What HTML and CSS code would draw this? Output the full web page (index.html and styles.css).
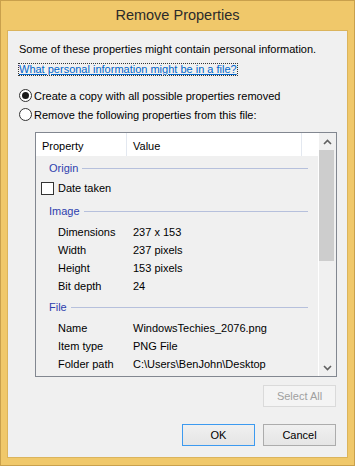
FILE: index.html
```html
<!DOCTYPE html>
<html lang="en">
<head>
  <meta charset="UTF-8">
  <meta name="viewport" content="width=device-width, initial-scale=1.0">
  <title>Remove Properties</title>
  <link rel="stylesheet" href="styles.css">
</head>
<body>

  <!-- Dialog window -->
  <div class="window">
    <div class="titlebar">Remove Properties</div>

    <div class="client">
      <p class="intro">Some of these properties might contain personal information.</p>
      <a class="help-link" href="#">What personal information might be in a file?</a>

      <div class="options">
        <label class="radio"><span class="dot checked"></span>Create a copy with all possible properties removed</label>
        <label class="radio"><span class="dot"></span>Remove the following properties from this file:</label>
      </div>

      <!-- Property list -->
      <div class="listbox">
        <div class="list">
          <div class="list-head">
            <div class="col-prop">Property</div>
            <div class="col-val">Value</div>
            <div class="col-rest"></div>
          </div>

          <div class="group first"><span>Origin</span></div>
          <div class="check-row"><span class="box"></span>Date taken</div>

          <div class="group"><span>Image</span></div>
          <div class="row"><span class="name">Dimensions</span><span>237 x 153</span></div>
          <div class="row"><span class="name">Width</span><span>237 pixels</span></div>
          <div class="row"><span class="name">Height</span><span>153 pixels</span></div>
          <div class="row"><span class="name">Bit depth</span><span>24</span></div>

          <div class="group"><span>File</span></div>
          <div class="row"><span class="name">Name</span><span>WindowsTechies_2076.png</span></div>
          <div class="row"><span class="name">Item type</span><span>PNG File</span></div>
          <div class="row"><span class="name">Folder path</span><span>C:\Users\BenJohn\Desktop</span></div>
        </div>

        <div class="scrollbar">
          <div class="arrow">
            <svg width="9" height="6" viewBox="0 0 9 6"><polyline points="1,5 4.5,1.5 8,5" fill="none" stroke="#606060" stroke-width="1.6"/></svg>
          </div>
          <div class="thumb"></div>
          <div class="track"></div>
          <div class="arrow">
            <svg width="9" height="6" viewBox="0 0 9 6"><polyline points="1,1 4.5,4.5 8,1" fill="none" stroke="#606060" stroke-width="1.6"/></svg>
          </div>
        </div>
      </div>

      <div class="select-row">
        <button class="btn" disabled>Select All</button>
      </div>

      <div class="footer">
        <button class="btn default">OK</button>
        <button class="btn">Cancel</button>
      </div>
    </div>
  </div>

</body>
</html>
```

FILE: styles.css
```css
* {
  box-sizing: border-box;
}

body {
  margin: 0;
  font-family: "Liberation Sans", Arial, sans-serif;
  font-size: 11px;
  color: #000;
}

/* Window frame */
.window {
  width: 355px;
  height: 466px;
  background-color: #f0c86a;
  border: 1px solid #c9a04c;
  display: flex;
  flex-direction: column;
}

.titlebar {
  height: 29px;
  line-height: 28px;
  text-align: center;
  font-size: 14.5px;
  color: #2b2b2b;
}

.client {
  margin: 0 6px;
  height: 428px;
  background-color: #f0f0f0;
  border: 1px solid #dbb45c;
  padding: 10px 10px 0 11px;
  display: flex;
  flex-direction: column;
}

.intro {
  margin: 0;
  line-height: 17px;
}

.help-link {
  align-self: flex-start;
  margin: 5px 0 0 -1px;
  line-height: 11px;
  border: 1px dotted #333;
  color: #0066cc;
  text-decoration: underline;
}

/* Radio options */
.options {
  margin-top: 10px;
  display: flex;
  flex-direction: column;
}

.radio {
  height: 19px;
  display: flex;
  align-items: center;
  gap: 2px;
}

.dot {
  width: 13px;
  height: 13px;
  border: 1px solid #333;
  border-radius: 50%;
  background-color: #fff;
  display: flex;
  align-items: center;
  justify-content: center;
}

.dot.checked::after {
  content: "";
  width: 7px;
  height: 7px;
  border-radius: 50%;
  background-color: #1a1a1a;
}

/* List box */
.listbox {
  margin: 8px 0 0 16px;
  width: 302px;
  height: 245px;
  border: 1px solid #828790;
  display: flex;
}

.list {
  flex: 1;
  display: flex;
  flex-direction: column;
}

.list-head {
  height: 23px;
  display: flex;
  background-color: #fff;
}

.list-head div {
  padding: 3px 0 0 6px;
  line-height: 20px;
}

.col-prop {
  width: 91px;
  border-right: 1px solid #e3e8f0;
}

.col-val {
  width: 175px;
  border-right: 1px solid #e3e8f0;
}

.col-rest {
  flex: 1;
}

.group {
  height: 22px;
  margin-top: 2px;
  padding: 2px 10px 0 13px;
  display: flex;
  align-items: center;
  gap: 4px;
  color: #2e3fae;
}

.group.first {
  margin-top: 0;
}

.group::after {
  content: "";
  flex: 1;
  height: 1px;
  background-color: #b6c0dc;
}

.check-row {
  height: 19px;
  padding: 1px 0 0 5px;
  display: flex;
  align-items: center;
  gap: 4px;
}

.box {
  width: 13px;
  height: 13px;
  border: 1px solid #333;
  background-color: #fff;
}

.row {
  height: 18px;
  padding: 4px 0 0 22px;
  display: flex;
  align-items: center;
}

.row .name {
  width: 75px;
}

/* Scroll bar */
.scrollbar {
  width: 18px;
  border-left: 1px solid #fff;
  display: flex;
  flex-direction: column;
}

.arrow {
  height: 17px;
  display: flex;
  align-items: center;
  justify-content: center;
}

.thumb {
  height: 111px;
  margin-right: 2px;
  background-color: #cdcdcd;
}

.track {
  flex: 1;
}

/* Buttons */
.select-row,
.footer {
  display: flex;
  justify-content: flex-end;
  gap: 8px;
  padding-right: 1px;
}

.select-row {
  margin-top: 8px;
}

.footer {
  margin-top: 17px;
}

.btn {
  width: 73px;
  height: 22px;
  padding: 0;
  font-family: inherit;
  font-size: 11px;
  color: #000;
  background: linear-gradient(#f0f0f0, #e5e5e5);
  border: 1px solid #acacac;
}

.btn.default {
  border-color: #3c9af0;
}

.btn:disabled {
  color: #a0a0a0;
  background: #f4f4f4;
  border-color: #dadada;
}
```
